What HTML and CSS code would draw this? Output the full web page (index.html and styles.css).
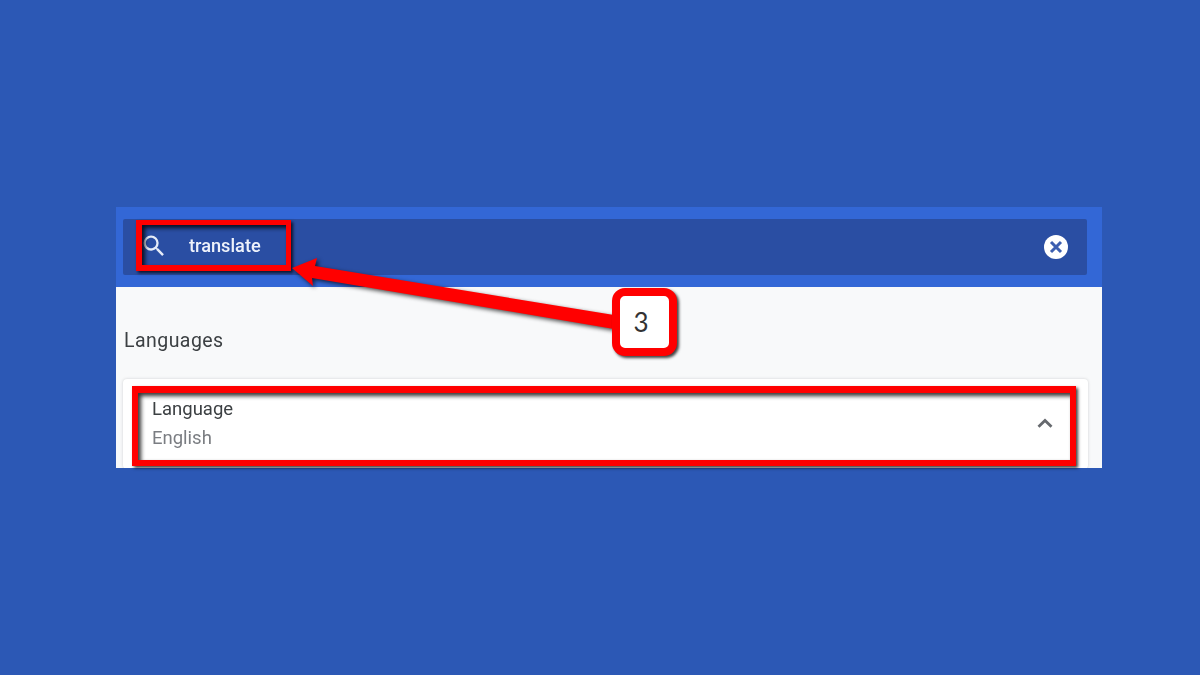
FILE: index.html
```html
<!DOCTYPE html>
<html lang="en">
<head>
<meta charset="utf-8">
<title>Language settings</title>
<link rel="stylesheet" href="styles.css">
</head>
<body>
<main class="window">
  <header class="header">
    <div class="search">
      <svg class="search-icon" viewBox="0 0 24 24" aria-hidden="true"><path d="M15.5 14h-.79l-.28-.27A6.47 6.47 0 0 0 16 9.5 6.5 6.5 0 1 0 9.5 16c1.61 0 3.09-.59 4.23-1.57l.27.28v.79l5 4.99L20.49 19l-4.99-5zm-6 0C7.01 14 5 11.99 5 9.5S7.01 5 9.5 5 14 7.01 14 9.5 11.99 14 9.5 14z"/></svg>
      <span class="search-text">translate</span>
      <svg class="clear-icon" viewBox="0 0 24 24" aria-hidden="true"><circle cx="12" cy="12" r="12" fill="#fff"/><path d="M7 7l10 10M17 7L7 17" stroke="#3d5fb0" stroke-width="3" fill="none"/></svg>
    </div>
  </header>
  <section class="content">
    <h2 class="section-title">Languages</h2>
    <div class="card">
      <div class="row">
        <div class="row-text">
          <div class="row-label">Language</div>
          <div class="row-value">English</div>
        </div>
        <svg class="chevron" viewBox="0 0 16 10" aria-hidden="true"><path d="M1.500 8.800L8 2.400l6.500 6.400" fill="none" stroke="#66696e" stroke-width="2.800"/></svg>
      </div>
    </div>
  </section>
</main>
<div class="mark mark-search"></div>
<div class="mark mark-language"></div>
<svg class="arrow" viewBox="0 0 1200 675" aria-hidden="true"><path d="M292 268L317 258L315 266L614 315L614 329L312 278L313 286Z" fill="#f00"/></svg>
<div class="badge">3</div>
</body>
</html>
```

FILE: styles.css
```css
html, body {
  margin: 0;
  height: 100%;
}
body {
  background: #2c58b5;
  font-family: Roboto, "Liberation Sans", sans-serif;
  padding-top: 207px;
  box-sizing: border-box;
  overflow: hidden;
}
.window {
  width: 986px;
  height: 261px;
  margin-left: 116px;
  background: #f8f9fa;
  overflow: hidden;
}
.header {
  background: #3367d6;
  height: 80px;
  padding: 12px 15px 12px 7px;
  box-sizing: border-box;
}
.search {
  height: 56px;
  background: #2a4ea3;
  display: flex;
  align-items: center;
  border-radius: 2px;
  padding: 0 19px 0 17px;
}
.search-icon {
  width: 28px;
  height: 28px;
  fill: #e6ecf8;
  flex: none;
  margin-top: -2px;
  filter: blur(.3px);
}
.search-text {
  margin-left: 21px;
  color: #eef2fb;
  font-size: 18.200px;
  font-weight: 500;
  flex: 1;
  margin-top: -4px;
  filter: blur(.3px);
}
.clear-icon {
  width: 24px;
  height: 24px;
  flex: none;
  filter: blur(.3px);
}
.content {
  padding: 0 14px 0 7px;
}
.section-title {
  margin: 0 0 0 1px;
  padding-top: 43px;
  font-size: 19.500px;
  line-height: 22px;
  font-weight: 400;
  letter-spacing: .45px;
  color: #3c4043;
  filter: blur(.3px);
}
.card {
  margin-top: 27px;
  background: #fff;
  border-radius: 4px;
  box-shadow: 0 0 3px rgba(60, 64, 67, .22);
  height: 90px;
  box-sizing: border-box;
  padding: 19px 35px 0 29px;
}
.row {
  display: flex;
  justify-content: space-between;
  align-items: center;
}
.row-label {
  font-size: 18.500px;
  line-height: 22px;
  color: #3c4043;
  filter: blur(.3px);
}
.row-value {
  font-size: 18.500px;
  line-height: 22px;
  margin-top: 7px;
  color: #7a7d82;
  filter: blur(.3px);
}
.chevron {
  width: 16px;
  height: 10px;
  margin-top: -2px;
}
.mark {
  position: absolute;
  box-sizing: border-box;
  border: 5px solid #f00;
  box-shadow: 2px 2px 3px rgba(0, 0, 0, .75), inset 3px 3px 4px rgba(0, 0, 0, .8);
}
.mark-search {
  left: 136px;
  top: 220px;
  width: 155px;
  height: 51px;
  border-width: 5px 5px 6px 6px;
}
.mark-language {
  left: 132px;
  top: 386px;
  width: 944px;
  height: 80px;
  border-width: 7px 6px 6px 6px;
}
.arrow {
  position: absolute;
  left: 0;
  top: 0;
  width: 1200px;
  height: 675px;
  filter: drop-shadow(2px 2px 2px rgba(0, 0, 0, .7));
  pointer-events: none;
}
.badge {
  position: absolute;
  left: 612px;
  top: 288px;
  width: 65px;
  height: 68px;
  box-sizing: border-box;
  border: 8px solid #f00;
  border-radius: 13px;
  background: #fff;
  box-shadow: 2px 2px 3px rgba(0, 0, 0, .75);
  display: flex;
  align-items: center;
  justify-content: center;
  padding-right: 7px;
  font-family: Lato, sans-serif;
  font-size: 26px;
  color: #333;
}
```
